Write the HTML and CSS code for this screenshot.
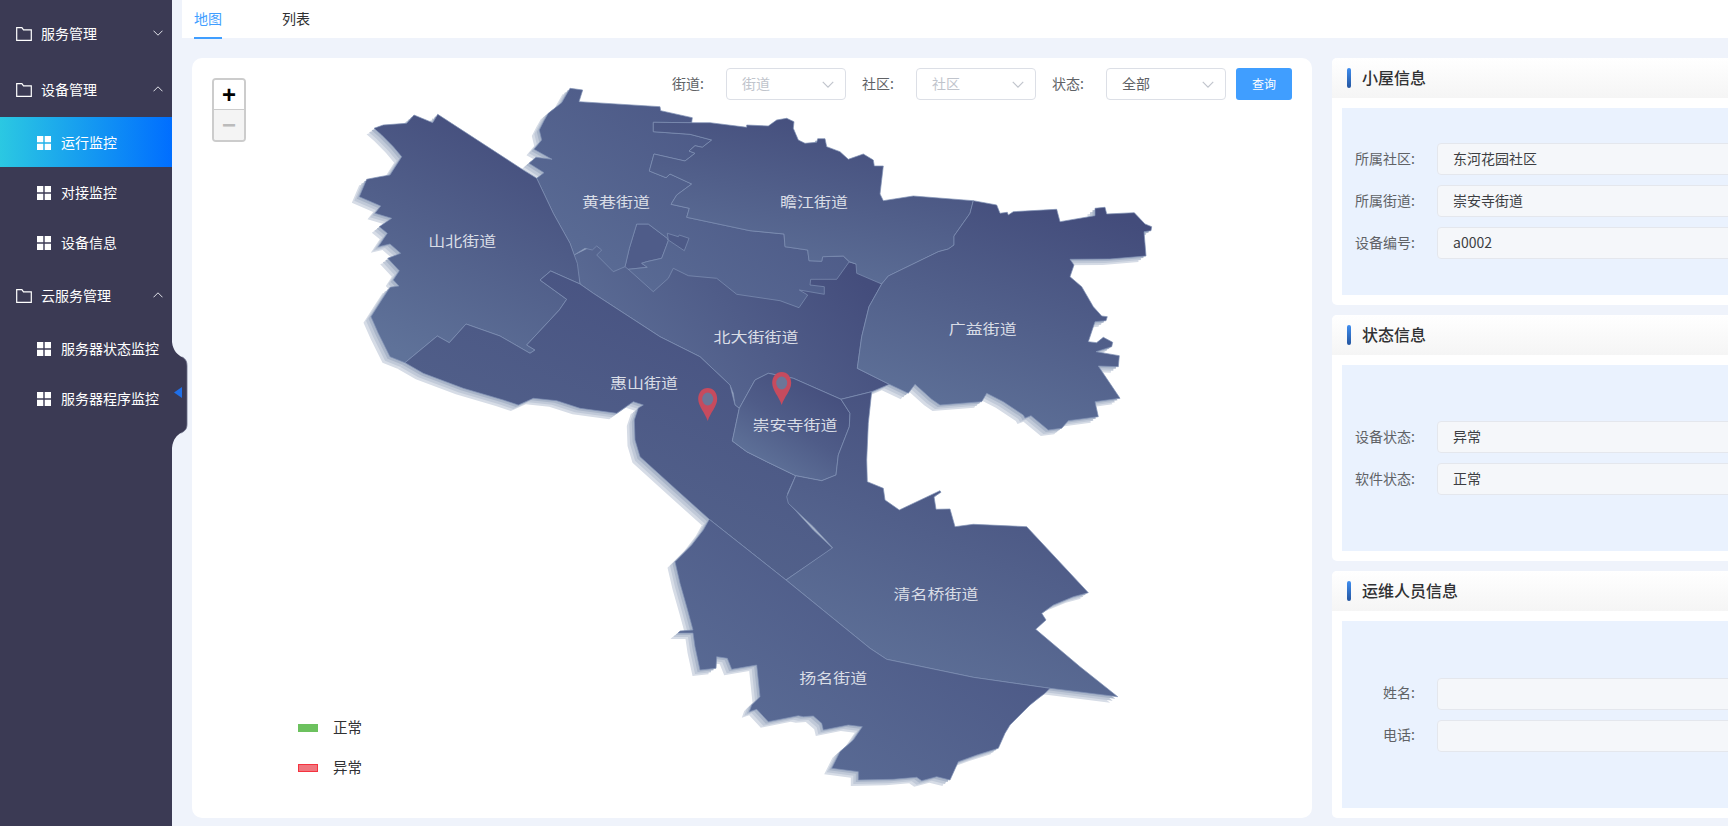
FILE: index.html
```html
<!DOCTYPE html>
<html lang="zh-CN">
<head>
<meta charset="utf-8">
<title>运行监控</title>
<link rel="stylesheet" href="styles.css">
</head>
<body>
<svg class="sprites" width="0" height="0" aria-hidden="true">
  <defs>
    <symbol id="i-folder" viewBox="0 0 16 14"><path d="M.7.7h5.2l1.6 2.2h7.8v10.4H.7z" fill="none" stroke="currentColor" stroke-width="1.2"/></symbol>
    <symbol id="i-grid" viewBox="0 0 14 14"><path d="M0 0h6.3v6.3H0zM7.7 0H14v6.3H7.7zM0 7.7h6.3V14H0zM7.7 7.7H14V14H7.7z" fill="currentColor"/></symbol>
    <symbol id="i-down" viewBox="0 0 10 6"><path d="M.5.7 5 5.2 9.5.7" fill="none" stroke="currentColor" stroke-width="1"/></symbol>
    <symbol id="i-up" viewBox="0 0 10 6"><path d="M.5 5.3 5 .8l4.5 4.5" fill="none" stroke="currentColor" stroke-width="1"/></symbol>
  </defs>
</svg>
<div class="app">
  <aside class="sidebar">
    <div class="nav-head"><svg class="ic-folder"><use href="#i-folder"/></svg><span>服务管理</span><svg class="ic-arrow"><use href="#i-down"/></svg></div>
    <div class="nav-head"><svg class="ic-folder"><use href="#i-folder"/></svg><span>设备管理</span><svg class="ic-arrow"><use href="#i-up"/></svg></div>
    <div class="nav-item active"><svg class="ic-grid"><use href="#i-grid"/></svg><span>运行监控</span></div>
    <div class="nav-item"><svg class="ic-grid"><use href="#i-grid"/></svg><span>对接监控</span></div>
    <div class="nav-item"><svg class="ic-grid"><use href="#i-grid"/></svg><span>设备信息</span></div>
    <div class="nav-head"><svg class="ic-folder"><use href="#i-folder"/></svg><span>云服务管理</span><svg class="ic-arrow"><use href="#i-up"/></svg></div>
    <div class="nav-item"><svg class="ic-grid"><use href="#i-grid"/></svg><span>服务器状态监控</span></div>
    <div class="nav-item"><svg class="ic-grid"><use href="#i-grid"/></svg><span>服务器程序监控</span></div>
    <svg class="collapse" viewBox="0 0 16 106" aria-hidden="true">
      <path class="collapse-shape" d="M0 0C1 9 6 13 10 15 14 17 15 20 15 24V82C15 87 13 89 9 91 5 93 1 97 0 106Z"/>
      <path class="collapse-edge" d="M10 15C14 17 15 20 15 24V82C15 87 13 89 9 91"/>
      <path class="collapse-tri" d="M10 45V56L2 50.500Z"/>
    </svg>
  </aside>
  <main class="main">
    <nav class="tabs">
      <span class="tab current">地图</span>
      <span class="tab">列表</span>
    </nav>
    <div class="content">
      <section class="map-card">
        <svg class="map" viewBox="192 58 1120 760" aria-hidden="true">
          <defs>
            <linearGradient id="g" x1=".72" y1="0" x2=".28" y2="1">
              <stop offset="0" stop-color="#434c7b"/>
              <stop offset="1" stop-color="#5f7299"/>
            </linearGradient>
            <linearGradient id="gh" x1=".8" y1="0" x2=".2" y2="1">
              <stop offset="0" stop-color="#465080"/>
              <stop offset="1" stop-color="#57688f"/>
            </linearGradient>
            <linearGradient id="gb" x1=".9" y1=".3" x2=".1" y2=".7">
              <stop offset="0" stop-color="#444d7c"/>
              <stop offset="1" stop-color="#5b6c95"/>
            </linearGradient>
            <linearGradient id="gs" x1=".8" y1="0" x2=".2" y2=".85">
              <stop offset="0" stop-color="#434c7b"/>
              <stop offset=".55" stop-color="#4f5c88"/>
              <stop offset="1" stop-color="#5f7299"/>
            </linearGradient>
            <linearGradient id="gy" x1=".85" y1=".3" x2=".2" y2=".95">
              <stop offset="0" stop-color="#4b5785"/>
              <stop offset="1" stop-color="#5b6d96"/>
            </linearGradient>
            <polygon id="r-shanbei" points="437.700,114.300 523.300,170 536.700,178.300 553.300,213.300 570,243.300 577.300,263.300 580,284 550.700,271 540,280 566.700,299.300 559.300,310 526.700,345 535,350 530,353.300 500,336 466,324 449.300,342.700 437.300,336 405,362.700 390,356.700 385,346.700 378.300,333.300 371,316.700 381.700,300 390,287.300 399,286 393.300,280 399.300,270.700 387.700,258.300 400.700,253.300 390,244 378.300,246.700 387.300,233.300 379.300,226.700 391.700,218.300 375,213.300 380.700,206 359.300,196.700 366.700,179.300 380,176.700 390,175 401.700,156.700 393.300,146.700 381.700,135 374,128.300 383.300,125 406.700,123.300 414,115 432.700,122.700"/>
            <polygon id="r-huishan" points="580,284 593.300,293.300 660,336.700 700,356.700 730,385 735,405 739.300,408.300 732.300,441 746.700,451.700 766.700,461.700 795.700,475.700 787.700,493.300 789,503.300 813.300,530 832.700,548.300 786,580 709.300,519.300 676.700,490 640,456.700 635,440 634.300,420 638.300,408 643.300,405 633.300,401.700 616.700,413.300 580,408.300 556.700,400.700 533.300,398.300 518.300,405 503.300,400 463.300,388.300 423.300,373.300 405,362.700 437.300,336 449.300,342.700 466,324 500,336 530,353.300 535,350 526.700,345 559.300,310 566.700,299.300 540,280 550.700,271"/>
            <polygon id="r-beida" points="580,284 574,255 636.700,224 700,215 856,264 881.700,284 869,306.700 861.700,336.700 857.300,368.300 889.300,384.300 871.700,391.700 841,399.300 793.300,378.300 768.300,373.300 755,380 739.300,408.300 735,405 733.300,393.300 730,385 700,356.700 660,336.700 593.300,293.300"/>
            <polygon id="r-huangxiang" points="536.700,178.300 544,172.700 529,163.300 536,157.300 552,159.300 534,149.300 541.700,140 539.300,130 544,120.700 548.300,113.300 561.700,102.700 570,88.300 582.700,90 579,101.700 660,106.700 660.700,110.700 692.300,117.700 691.700,122.700 653.300,122.300 653.300,131.700 690,134.300 711.700,140 702.300,147.300 695,145.700 689,151 695,153.300 685,161 654,154 649.300,171 666,177.700 670,174 691.700,184 676.700,195 671,204.300 689.300,208.300 686.700,217.300 750,230.700 784,234 785,246.700 807.700,250 809,260.700 821.700,261.300 822.700,256.700 843.300,256 849.300,261.700 836.700,279.300 810.700,279.300 810,285 824.300,286.700 824.300,294.300 799.300,290 807.700,295 799,307.700 780,300.700 736.700,294.300 716.700,278.300 688.300,275.700 673.300,268.300 668.300,278.300 653.300,291.700 628.300,269.300 647.300,267.300 641.700,263.300 646.700,261.700 661.700,258.300 668.300,240.700 667.300,238.300 648.300,224 636.700,224 629.300,248.300 625,266.700 613.300,271.700 596.700,255 601.700,250 596.700,246 592.300,250 585,248.300 574,255 570,243.300 553.300,213.300"/>
            <polygon id="r-zhanjiang" points="653.300,122.300 691.700,122.700 710,122.700 746.700,127.300 746.700,125 768.300,126 776.700,120 786.700,118.300 794,121.700 793.300,128.300 798.300,140 805,143.300 816.700,142.300 817.700,138.700 825,138.700 826.700,146.700 840,151.700 848.300,159.300 863.300,154 873.300,160 874.300,166 883.300,166 880,194 883.300,200.700 913.300,196 973.300,200.700 970,213.300 954,236 954,245 948.300,249 938.300,251.700 888.300,276 881.700,284 856.700,273.300 856,264 849.300,261.700 843.300,256 822.700,256.700 821.700,261.300 809,260.700 807.700,250 785,246.700 784,234 750,230.700 686.700,217.300 689.300,208.300 671,204.300 676.700,195 691.700,184 670,174 666,177.700 649.300,171 654,154 685,161 695,153.300 689,151 695,145.700 702.300,147.300 711.700,140 690,134.300 653.300,131.700"/>
            <polygon id="r-islet" points="667.300,233.300 678.300,236.700 679.300,235 689,238.300 684.300,250.700 668.300,240"/>
            <polygon id="r-pocket" points="636.700,224 648.300,224 667.300,238.300 668.300,240.700 661.700,258.300 646.700,261.700 641.700,263.300 647.300,267.300 628.300,269.300 625,266.700 629.300,248.300"/>
            <polygon id="r-guangyi" points="973.300,200.700 996.700,205 1000,213.300 1007.300,212.300 1008.300,215 1013.300,211.700 1056.700,209.300 1060,221.700 1095,215.700 1095,208.300 1105,207.300 1106.700,214 1134.300,212.700 1145,224 1151.700,226.700 1151,230.700 1144,231.700 1146,256 1110,259 1070,259.300 1074,265 1070,276.700 1081.700,286.700 1093.300,306.700 1101.700,316 1107.300,316.700 1106,320.700 1095,321.700 1088.300,341.700 1096.700,342.700 1103.300,337.300 1112.700,342.300 1111.700,346.700 1096,351.700 1119.300,355.700 1118.300,366.700 1098.300,366 1120,398.300 1095,401.700 1098.300,416.700 1068.300,420.700 1061.700,428.300 1048.300,430 1031,415.700 1025,418 1023.300,415 1003.300,401.700 986.700,393.300 981.700,401.700 940,405 931.700,399.300 915,384.300 908.300,393.300 889.300,384.300 857.300,368.300 861.700,336.700 869,306.700 881.700,284 888.300,276 938.300,251.700 948.300,249 954,245 954,236 970,213.300"/>
            <polygon id="r-chongan" points="739.300,408.300 755,380 768.300,373.300 793.300,378.300 841,399.300 850,413.300 849.300,426.700 838.300,455 836,475 821.700,480.700 795.700,475.700 766.700,461.700 746.700,451.700 732.300,441"/>
            <polygon id="r-qingming" points="841,399.300 871.700,391.700 868.300,423.300 866.700,460 867.300,481.700 883.300,488.300 885,500 899.300,510 940,490.700 941,492.300 934,496.700 936,509.300 950,509 955,526.700 973.300,524.300 1026.700,526.700 1088.300,592.700 1073.300,596.700 1053.300,605 1041.700,613.300 1046,620 1035.700,629.300 1080,666.700 1117.700,696.700 1050,688.300 973.300,677.300 886.700,659.300 870,648.300 786,580 832.700,547.700 813.300,526.700 788.300,503.300 786.700,496.700 795.700,475.700 821.700,480.700 836,475 838.300,455 849.300,426.700 850,413.300"/>
            <polygon id="r-yangming" points="709.300,519.300 786,580 870,648.300 886.700,659.300 973.300,677.300 1050,688.300 1045,693.300 1038.300,698.300 1030,705 1010,725 1005,733.300 998.300,748.300 976.700,755 958.300,761.700 950,780 936.700,776.700 921.700,780.700 916.700,777.300 893.300,779.300 858.300,780 858.300,771.700 831.700,768.300 840,751.700 853.300,740 862.300,726.700 848.300,725 823.300,730 821.700,723.300 813.300,716 803.300,716.700 798.300,715.700 768.300,721.700 756.700,709.300 749.300,711.700 751.700,705 760,696.700 756.700,665 731.700,669.300 727.300,658.300 716.700,656.700 716,668.300 700,670 695,646.700 693,633 678,633 680,631 693,630 686.700,606.700 680,583.300 675,561.700 691.700,545 703.300,530"/>
            <g id="land">
              <use href="#r-shanbei"/><use href="#r-huishan"/><use href="#r-beida"/><use href="#r-huangxiang"/><use href="#r-zhanjiang"/><use href="#r-guangyi"/><use href="#r-qingming"/><use href="#r-yangming"/>
            </g>
            <g id="pin">
              <path class="pin-body" d="M0 21C-2.500 13-9.500 6-9.500-1-9.500-7.500-5.500-12 0-12 5.500-12 9.500-7.500 9.500-1 9.500 6 2.500 13 0 21Z"/>
              <ellipse class="pin-hole" cx="0" cy="-1" rx="5.500" ry="6.500"/>
            </g>
          </defs>
          <use href="#land" class="shadow-3" x="-7.500" y="6"/>
          <use href="#land" class="shadow-2" x="-5" y="4"/>
          <use href="#land" class="shadow-1" x="-2.500" y="2"/>
          <g class="regions">
            <use href="#r-beida" fill="url(#gb)"/>
            <use href="#r-pocket" fill="#4f5c89"/>
            <use href="#r-huangxiang" fill="url(#gy)"/>
            <use href="#r-zhanjiang" fill="url(#g)"/>
            <use href="#r-islet" fill="#4d5a87"/>
            <use href="#r-shanbei" fill="url(#g)"/>
            <use href="#r-huishan" fill="url(#gh)"/>
            <use href="#r-guangyi" fill="url(#g)"/>
            <use href="#r-chongan" fill="url(#gs)"/>
            <use href="#r-qingming" fill="url(#g)"/>
            <use href="#r-yangming" fill="url(#gy)"/>
          </g>
          <g class="labels">
            <text x="462.300" y="247">山北街道</text>
            <text x="616" y="208">黄巷街道</text>
            <text x="814" y="208">瞻江街道</text>
            <text x="756" y="343">北大街街道</text>
            <text x="982.700" y="335">广益街道</text>
            <text x="644" y="389">惠山街道</text>
            <text x="795" y="431">崇安寺街道</text>
            <text x="936" y="600">清名桥街道</text>
            <text x="833.300" y="684">扬名街道</text>
          </g>
          <use href="#pin" x="707.700" y="400"/>
          <use href="#pin" x="781.700" y="384"/>
        </svg>
        <div class="zoom-ctl">
          <button class="zoom-btn">+</button>
          <button class="zoom-btn off">−</button>
        </div>
        <form class="filters">
          <label class="f-label">街道:</label>
          <div class="select muted">街道<svg class="ic-select"><use href="#i-down"/></svg></div>
          <label class="f-label">社区:</label>
          <div class="select muted">社区<svg class="ic-select"><use href="#i-down"/></svg></div>
          <label class="f-label">状态:</label>
          <div class="select">全部<svg class="ic-select"><use href="#i-down"/></svg></div>
          <button class="query" type="button">查询</button>
        </form>
        <ul class="legend">
          <li class="legend-row"><i class="swatch ok"></i>正常</li>
          <li class="legend-row"><i class="swatch bad"></i>异常</li>
        </ul>
      </section>
      <div class="panels">
        <section class="panel">
          <h2 class="panel-head">小屋信息</h2>
          <div class="panel-inner">
            <div class="field"><span class="f-name">所属社区:</span><div class="f-value">东河花园社区</div></div>
            <div class="field"><span class="f-name">所属街道:</span><div class="f-value">崇安寺街道</div></div>
            <div class="field"><span class="f-name">设备编号:</span><div class="f-value">a0002</div></div>
          </div>
        </section>
        <section class="panel">
          <h2 class="panel-head">状态信息</h2>
          <div class="panel-inner">
            <div class="field"><span class="f-name">设备状态:</span><div class="f-value">异常</div></div>
            <div class="field"><span class="f-name">软件状态:</span><div class="f-value">正常</div></div>
          </div>
        </section>
        <section class="panel">
          <h2 class="panel-head">运维人员信息</h2>
          <div class="panel-inner">
            <div class="field"><span class="f-name">姓名:</span><div class="f-value"></div></div>
            <div class="field"><span class="f-name">电话:</span><div class="f-value"></div></div>
          </div>
        </section>
      </div>
    </div>
  </main>
</div>
</body>
</html>
```
FILE: styles.css
```css
* { box-sizing: border-box; }
html, body { margin: 0; height: 100%; }
body {
  overflow: hidden;
  background: #eff3fb;
  color: #303133;
  font: 14px/1.2 "Noto Sans CJK SC", "Noto Sans", sans-serif;
}
.sprites { position: absolute; }
.app { display: flex; width: 1728px; height: 826px; }

/* sidebar */
.sidebar {
  position: relative;
  flex: 0 0 172px;
  padding-top: 5px;
  background: #3b3a54;
  color: #fff;
}
.nav-head, .nav-item { display: flex; align-items: center; white-space: nowrap; }
.nav-head { height: 56px; padding: 0 9px 0 16px; }
.nav-item { height: 50px; padding-left: 37px; }
.nav-item.active { background: linear-gradient(90deg, #2bc8e2, #006eff); }
.ic-folder { flex: none; width: 16px; height: 14px; margin: 2px 9px 0 0; }
.ic-grid { flex: none; width: 14px; height: 14px; margin: 2px 10px 0 0; }
.ic-arrow { flex: none; width: 10px; height: 6px; margin-left: auto; color: #e0e1e8; }
.collapse { position: absolute; left: 172px; top: 342px; width: 16px; height: 106px; }
.collapse-shape { fill: #3b3a54; }
.collapse-edge { fill: none; stroke: #6b6d88; stroke-width: .8; }
.collapse-tri { fill: #1f6fe8; }

/* main */
.main { flex: 1; min-width: 0; margin-left: 10px; overflow: hidden; }
.tabs { display: flex; gap: 60px; height: 38px; padding-left: 12px; background: #fff; }
.tab { position: relative; line-height: 36px; color: #303133; }
.tab.current { color: #409eff; }
.tab.current::after {
  content: "";
  position: absolute;
  left: 0;
  right: 0;
  top: 37px;
  height: 2px;
  background: #409eff;
}
.content { display: flex; gap: 20px; padding: 20px 0 0 10px; }

/* map card */
.map-card {
  position: relative;
  flex: 0 0 1120px;
  height: 760px;
  border-radius: 10px;
  background: #fff;
  overflow: hidden;
}
.map { position: absolute; left: 0; top: 0; width: 1120px; height: 760px; }
.shadow-1 { fill: #a9b5c9; }
.shadow-2 { fill: #c0c9d8; }
.shadow-3 { fill: #d6dce6; }
.regions { stroke: #7f90b5; stroke-width: .7; stroke-linejoin: round; }
.labels { fill: #d9dde6; font-size: 17px; text-anchor: middle; }
.labels text { transform-box: fill-box; transform-origin: center; transform: scaleY(.82); }
.pin-body { fill: #c64b5e; }
.pin-hole { fill: #6c7698; }

.filters {
  position: relative;
  display: flex;
  align-items: center;
  justify-content: flex-end;
  height: 32px;
  margin: 10px 20px 0 0;
}
.f-label { flex: 0 0 34px; margin: 0 20px 2px 16px; color: #606266; white-space: nowrap; }
.select {
  position: relative;
  display: flex;
  align-items: center;
  width: 120px;
  height: 32px;
  padding: 0 0 2px 15px;
  border: 1px solid #dcdfe6;
  border-radius: 4px;
  background: #fff;
  color: #606266;
}
.select.muted { color: #c0c4cc; }
.ic-select { position: absolute; right: 11px; top: 12px; width: 12px; height: 7px; color: #c0c4cc; }
.query {
  width: 56px;
  height: 32px;
  margin-left: 10px;
  padding: 0;
  border: 0;
  border-radius: 3px;
  background: #409eff;
  color: #fff;
  font: inherit;
  font-size: 12px;
}

.zoom-ctl {
  position: absolute;
  z-index: 1;
  left: 20px;
  top: 20px;
  display: flex;
  flex-direction: column;
  border: 2px solid rgba(0, 0, 0, .2);
  border-radius: 4px;
}
.zoom-btn {
  width: 30px;
  height: 30px;
  padding: 0;
  border: 0;
  background: #fff;
  color: #000;
  font: bold 24px/30px "Liberation Sans", sans-serif;
}
.zoom-btn:first-child { border-bottom: 1px solid #ccc; border-radius: 2px 2px 0 0; }
.zoom-btn.off { background: #f4f4f4; color: #bbb; border-radius: 0 0 2px 2px; }

.legend {
  position: absolute;
  left: 106px;
  top: 658px;
  margin: 0;
  padding: 0;
  list-style: none;
  font-size: 14.500px;
}
.legend-row { display: flex; align-items: center; height: 24px; margin-bottom: 16px; padding-bottom: 2px; color: #303133; }
.swatch { width: 20px; height: 8px; margin: 2px 15px 0 0; }
.swatch.ok { background: #6cc15e; }
.swatch.bad { background: #f0767e; border: 1px solid #f5333f; }

/* right panels */
.panels { flex: 0 0 500px; display: flex; flex-direction: column; gap: 10px; height: 760px; }
.panel { flex: 1; display: flex; flex-direction: column; padding-bottom: 10px; border-radius: 5px; background: #fff; overflow: hidden; }
.panel-head {
  position: relative;
  flex: none;
  height: 40px;
  margin: 0;
  padding-left: 30px;
  background: linear-gradient(#fff, #f5f5f5);
  color: #303133;
  font-size: 16px;
  font-weight: 500;
  line-height: 38px;
}
.panel-head::before {
  content: "";
  position: absolute;
  left: 15px;
  top: 10px;
  width: 4px;
  height: 20px;
  border-radius: 2px;
  background: linear-gradient(#3f8ef0, #24559f);
}
.panel-inner {
  flex: 1;
  display: flex;
  flex-direction: column;
  justify-content: center;
  gap: 10px;
  margin: 10px 0 0 10px;
  background: #eaf2fe;
}
.field { display: flex; align-items: center; height: 32px; }
.f-name { flex: 0 0 95px; padding: 0 22px 2px 0; color: #606266; text-align: right; white-space: nowrap; }
.f-value {
  flex: 1;
  height: 32px;
  padding-left: 15px;
  border: 1px solid #e4e7ed;
  border-radius: 4px;
  background: #f5f7fa;
  color: #3c3e42;
  line-height: 28px;
}
```
